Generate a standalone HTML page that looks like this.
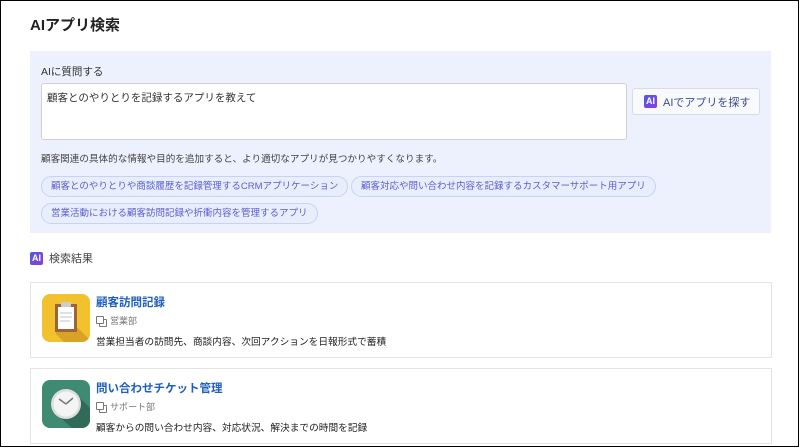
<!DOCTYPE html>
<html><head><meta charset="utf-8"><style>
*{box-sizing:border-box;margin:0;padding:0}
body{width:800px;height:448px;background:#fff;font-family:"Liberation Sans","Noto Sans CJK JP",sans-serif;color:#333;overflow:hidden;position:relative}
.frame{position:absolute;left:0;top:0;width:799px;height:447px;border:1px solid #000}
.abs{position:absolute;white-space:nowrap}
h1{position:absolute;left:30px;top:14px;font-size:15px;font-weight:bold;color:#222}
.panel{left:30px;top:51px;width:741px;height:182px;background:#ecf1fd}
.lbl{left:41px;top:64px;font-size:10.5px;color:#333}
.ta{left:41px;top:83px;width:586px;height:57px;background:#fff;border:1px solid #d0d0d0;border-radius:3px;font-size:10.5px;padding:6px 5px;color:#333}
.btn{left:632px;top:88px;width:128px;height:27px;background:#f8f9fb;border:1px solid #d9dce3;border-radius:3px;font-size:11px;color:#3a4b8a;display:flex;align-items:center;padding-left:11px}
.ai{display:inline-block;width:13px;height:13px;border-radius:2px;background:linear-gradient(135deg,#4f5be0,#8b3fd9);color:#fff;font-size:9px;font-weight:bold;line-height:13px;text-align:center;margin-right:6px}
.hint{left:41px;top:151px;font-size:9.6px;color:#444}
.chip{height:21px;border:1px solid #c8d3f3;background:#e9eefc;border-radius:11px;font-size:9.5px;color:#5a5fd0;line-height:19px;padding:0 9px}
.res{left:30px;top:250px;font-size:11px;color:#444;display:flex;align-items:center}
.card{left:30px;width:742px;height:76px;border:1px solid #e3e3e3;background:#fff}
.icon{position:absolute;left:11px;top:11px;width:48px;height:48px;border-radius:8px;overflow:hidden}
.t{position:absolute;left:65px;top:11px;font-size:11.5px;font-weight:bold;color:#1f5fbf}
.s{position:absolute;left:65px;top:31px;font-size:9px;color:#777;display:flex;align-items:center}
.s i{display:inline-block;width:8px;height:8px;border:1px solid #777;border-radius:1px;margin-right:6px;position:relative;top:-1px;box-shadow:3px 3px 0 -1px #fff,3px 3px 0 0 #777}
.d{position:absolute;left:65px;top:51px;font-size:9.7px;color:#222;white-space:nowrap}
</style></head><body>
<div class="frame"></div>
<h1>AIアプリ検索</h1>
<div class="abs panel"></div>
<div class="abs lbl">AIに質問する</div>
<div class="abs ta">顧客とのやりとりを記録するアプリを教えて</div>
<div class="abs btn"><span class="ai">AI</span>AIでアプリを探す</div>
<div class="abs hint">顧客関連の具体的な情報や目的を追加すると、より適切なアプリが見つかりやすくなります。</div>
<div class="abs chip" style="left:41px;top:176px">顧客とのやりとりや商談履歴を記録管理するCRMアプリケーション</div>
<div class="abs chip" style="left:351px;top:176px">顧客対応や問い合わせ内容を記録するカスタマーサポート用アプリ</div>
<div class="abs chip" style="left:41px;top:203px">営業活動における顧客訪問記録や折衝内容を管理するアプリ</div>
<div class="abs res"><span class="ai">AI</span>検索結果</div>
<div class="abs card" style="top:282px">
 <div class="icon"><svg width="48" height="48"><rect width="48" height="48" fill="#f2c12e"/><path d="M14 12 L48 46 L48 48 L22 48 L14 40Z" fill="#d9a325"/><rect x="13" y="10" width="22" height="28" fill="#a0623a"/><rect x="16" y="13" width="16" height="22" fill="#fff"/><rect x="19" y="8" width="10" height="5" rx="1" fill="#ccc"/><rect x="18" y="18" width="12" height="2" fill="#e0e0e0"/><rect x="18" y="22" width="12" height="2" fill="#e0e0e0"/><rect x="18" y="26" width="10" height="2" fill="#e0e0e0"/></svg></div>
 <div class="t">顧客訪問記録</div>
 <div class="s"><i></i>営業部</div>
 <div class="d">営業担当者の訪問先、商談内容、次回アクションを日報形式で蓄積</div>
</div>
<div class="abs card" style="top:368px">
 <div class="icon"><svg width="48" height="48"><rect width="48" height="48" fill="#3f8a72"/><path d="M34 14 L48 28 L48 48 L30 48 L14 34Z" fill="#2f6b58"/><circle cx="24" cy="24" r="15" fill="#ddd"/><circle cx="24" cy="24" r="12.5" fill="#f4f4f4"/><path d="M24 24 L17 19 M24 24 L31 18" stroke="#777" stroke-width="1.5"/></svg></div>
 <div class="t">問い合わせチケット管理</div>
 <div class="s"><i></i>サポート部</div>
 <div class="d">顧客からの問い合わせ内容、対応状況、解決までの時間を記録</div>
</div>
</body></html>
